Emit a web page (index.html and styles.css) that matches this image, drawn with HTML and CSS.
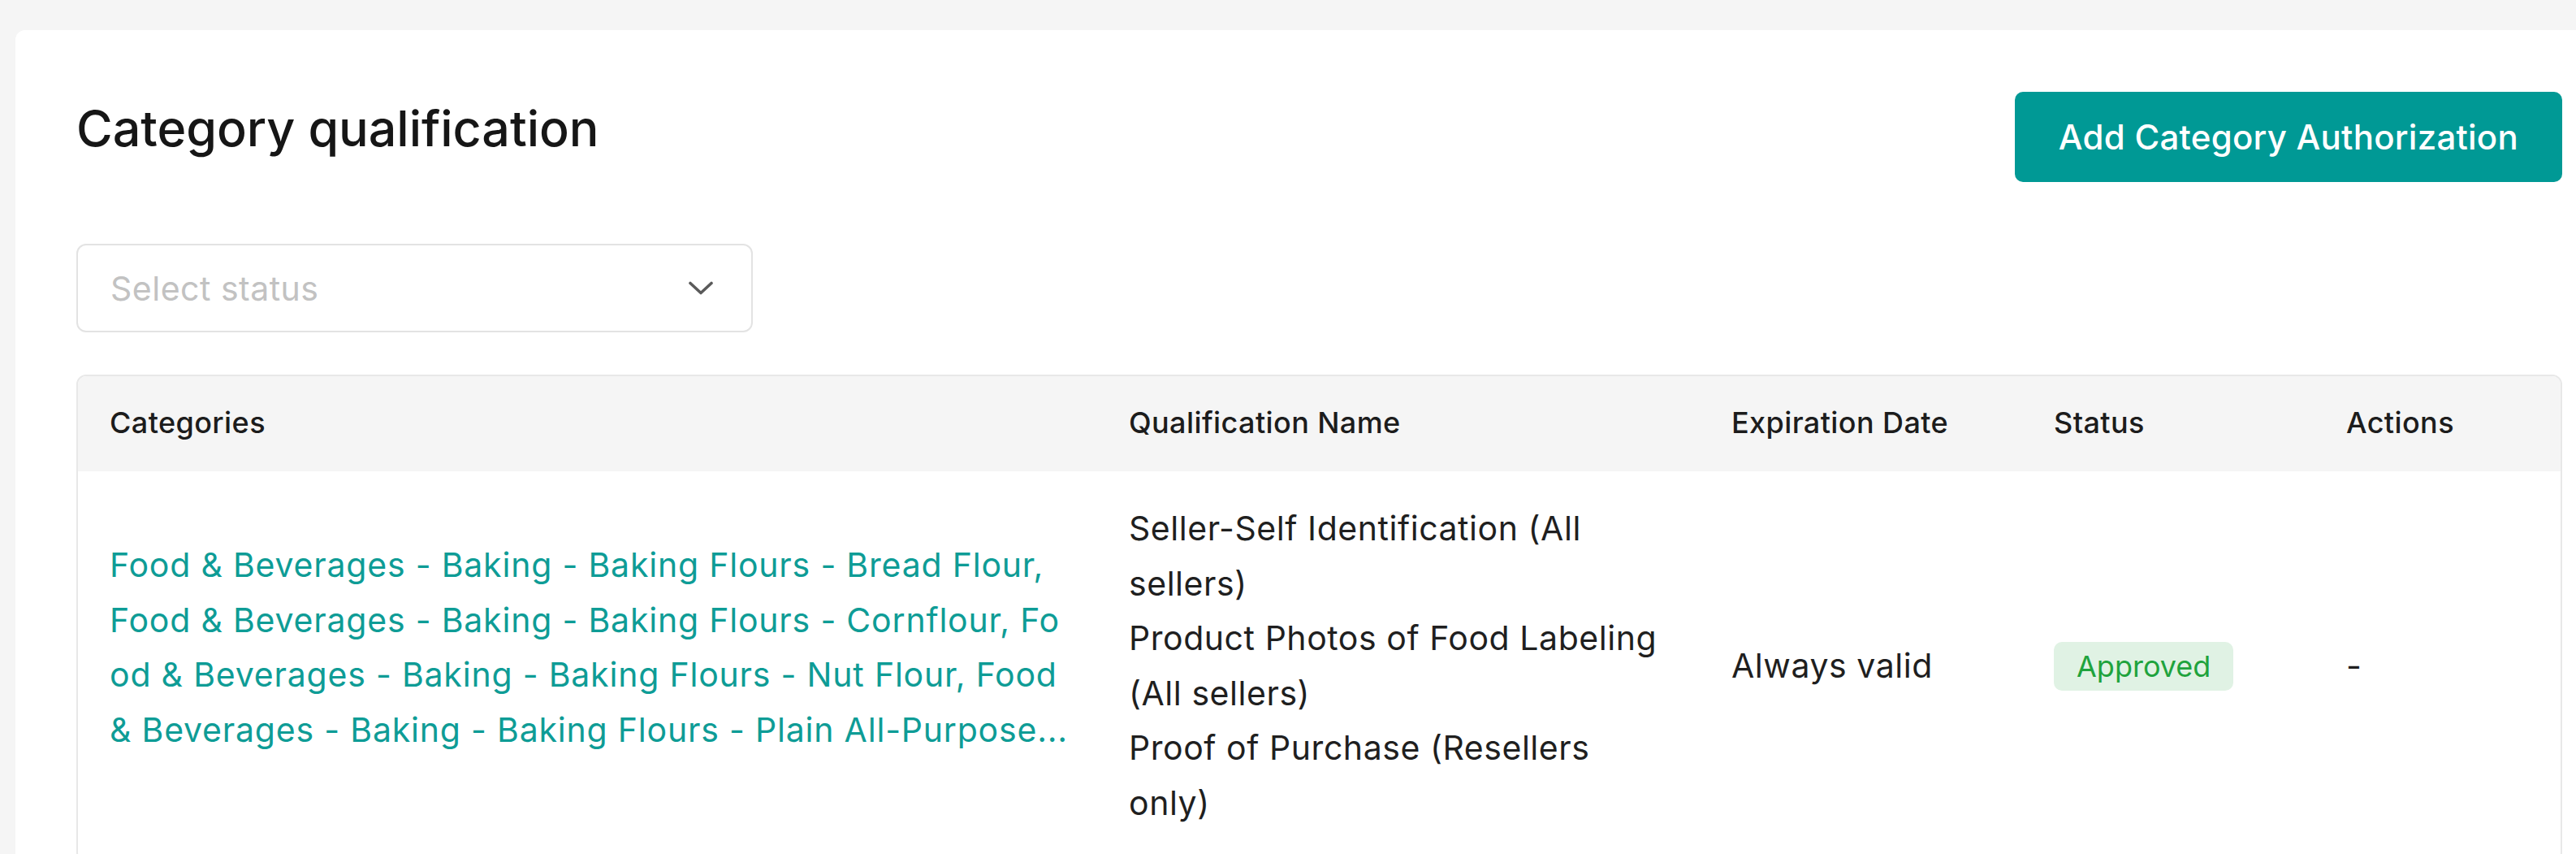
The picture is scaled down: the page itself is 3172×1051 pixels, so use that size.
FILE: index.html
```html
<!DOCTYPE html>
<html lang="en">
<head>
<meta charset="utf-8">
<title>Category qualification</title>
<link rel="stylesheet" href="styles.css">
</head>
<body>
<div class="card">
  <div class="page-head">
    <h1 class="title">Category qualification</h1>
    <button class="btn-primary" type="button">Add Category Authorization</button>
  </div>

  <div class="select">
    <span class="select-placeholder">Select status</span>
    <svg class="select-arrow" viewBox="0 0 30 17" aria-hidden="true">
      <path d="M2 2.5 L15 14.5 L28 2.5" fill="none" stroke="#5a5a5a" stroke-width="3.6" stroke-linecap="round" stroke-linejoin="round"/>
    </svg>
  </div>

  <div class="table">
    <div class="tr thead">
      <div class="th">Categories</div>
      <div class="th">Qualification Name</div>
      <div class="th">Expiration Date</div>
      <div class="th">Status</div>
      <div class="th">Actions</div>
    </div>
    <div class="tr tbody">
      <div class="td td-cat">
        <span class="line">Food &amp; Beverages - Baking - Baking Flours - Bread Flour,</span>
        <span class="line">Food &amp; Beverages - Baking - Baking Flours - Cornflour, Fo</span>
        <span class="line">od &amp; Beverages - Baking - Baking Flours - Nut Flour, Food</span>
        <span class="line">&amp; Beverages - Baking - Baking Flours - Plain All-Purpose...</span>
      </div>
      <div class="td td-qual">
        <div class="qual-item"><span class="line">Seller-Self Identification (All</span><span class="line">sellers)</span></div>
        <div class="qual-item"><span class="line">Product Photos of Food Labeling</span><span class="line">(All sellers)</span></div>
        <div class="qual-item"><span class="line">Proof of Purchase (Resellers</span><span class="line">only)</span></div>
      </div>
      <div class="td">Always valid</div>
      <div class="td td-status"><span class="badge badge-success">Approved</span></div>
      <div class="td">-</div>
    </div>
  </div>
</div>
</body>
</html>
```

FILE: styles.css
```css
html, body {
  margin: 0;
  height: 100%;
  overflow: hidden;
  background: #f5f5f5;
}

body {
  box-sizing: border-box;
  padding: 37px 0 0 19px;
  font-family: Inter, "Noto Sans", "Liberation Sans", sans-serif;
  color: #1f1f1f;
}

.card {
  background: #ffffff;
  border-radius: 12px 0 0 0;
  padding: 76px 17px 0 75px;
  min-height: 1200px;
}

/* Header */
.page-head {
  display: flex;
  justify-content: space-between;
  align-items: flex-start;
}

.title {
  margin: 8px 0 0;
  font-size: 61px;
  line-height: 74px;
  font-weight: 500;
  color: #161616;
  letter-spacing: -0.05px;
}

.btn-primary {
  height: 111px;
  padding: 0 54px;
  border: none;
  border-radius: 10px;
  background: #009995;
  color: #ffffff;
  font-family: inherit;
  font-size: 42px;
  font-weight: 500;
  letter-spacing: 0.25px;
  cursor: pointer;
}

/* Select */
.select {
  box-sizing: border-box;
  width: 833px;
  height: 109px;
  margin-top: 76px;
  padding: 0 47px 0 40px;
  border: 2px solid #e3e3e3;
  border-radius: 12px;
  display: flex;
  align-items: center;
  justify-content: space-between;
}

.select-placeholder {
  font-size: 41px;
  letter-spacing: 0.5px;
  color: #c2c2c2;
}

.select-arrow {
  width: 30px;
  height: 17px;
}

/* Table */
.table {
  margin-top: 52px;
  border: 2px solid #e8e8e8;
  border-radius: 12px;
  overflow: hidden;
}

.tr {
  display: grid;
  grid-template-columns: 1255px 742px 397px 360px 1fr;
}

.thead {
  background: #f5f5f5;
}

.th {
  padding: 30px 39px 33px;
  font-size: 36px;
  line-height: 54px;
  font-weight: 500;
  color: #1c1c1c;
  letter-spacing: 0.4px;
}

.tbody {
  align-items: center;
}

.td {
  padding: 37px 39px;
  font-size: 41px;
  line-height: 67.5px;
  color: #1f1f1f;
  letter-spacing: 0.55px;
}

.line {
  display: block;
  white-space: nowrap;
}

.td-cat {
  padding-bottom: 82px;
  color: #0e9c96;
  letter-spacing: 0.8px;
}

.td-status {
  display: flex;
  align-items: center;
}

.badge {
  display: inline-block;
  height: 60px;
  line-height: 60px;
  padding: 0 28px;
  border-radius: 10px;
  font-size: 36px;
  letter-spacing: 0;
}

.badge-success {
  background: #e0f2e4;
  color: #1fa33d;
}
```
